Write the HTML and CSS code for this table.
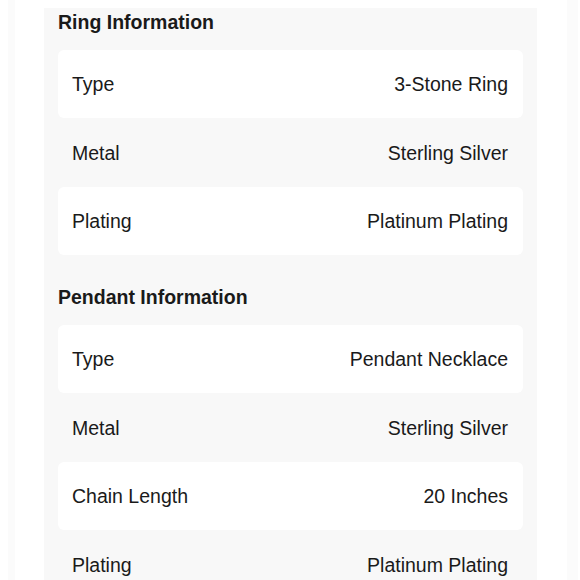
FILE: index.html
```html
<!DOCTYPE html>
<html>
<head>
<meta charset="utf-8">
<link rel="stylesheet" href="styles.css">
</head>
<body>
<div class="page">
  <div class="edge edge-left"></div>
  <main class="panel">
    <section class="group">
      <h2 class="group-title">Ring Information</h2>
      <div class="row row-white"><span class="label">Type</span><span class="value">3-Stone Ring</span></div>
      <div class="row"><span class="label">Metal</span><span class="value">Sterling Silver</span></div>
      <div class="row row-white"><span class="label">Plating</span><span class="value">Platinum Plating</span></div>
    </section>
    <section class="group">
      <h2 class="group-title">Pendant Information</h2>
      <div class="row row-white"><span class="label">Type</span><span class="value">Pendant Necklace</span></div>
      <div class="row"><span class="label">Metal</span><span class="value">Sterling Silver</span></div>
      <div class="row row-white"><span class="label">Chain Length</span><span class="value">20 Inches</span></div>
      <div class="row"><span class="label">Plating</span><span class="value">Platinum Plating</span></div>
    </section>
  </main>
  <div class="edge edge-right"></div>
</div>
</body>
</html>
```
FILE: styles.css
```css
html, body {
  margin: 0;
  padding: 0;
  background: #ffffff;
  height: 580px;
  overflow: hidden;
}
body {
  font-family: "Liberation Sans", Arial, sans-serif;
  color: #1a1a1a;
}
.page {
  display: flex;
  height: 580px;
}
.edge {
  background: #fbfbfb;
  height: 580px;
}
.edge-left {
  margin-left: 8px;
  width: 7px;
  margin-right: 29px;
}
.edge-right {
  margin-left: 30px;
  width: 11px;
}
.panel {
  width: 493px;
  margin-top: 8px;
  background: #f8f8f8;
  padding: 2px 14px 0 13.5px;
  box-sizing: border-box;
}
.group + .group {
  margin-top: 30px;
}
.group-title {
  margin: 0 0 15.5px 0;
  padding-left: 0.5px;
  font-size: 19.5px;
  line-height: 24px;
  font-weight: bold;
  color: #1a1a1a;
}
.row {
  display: flex;
  justify-content: space-between;
  align-items: center;
  box-sizing: border-box;
  height: 68.5px;
  padding: 2px 15px 0 14.5px;
  border-radius: 6px;
  font-size: 19.5px;
}
.row-white {
  background: #ffffff;
}
.label, .value {
  white-space: nowrap;
}
```
